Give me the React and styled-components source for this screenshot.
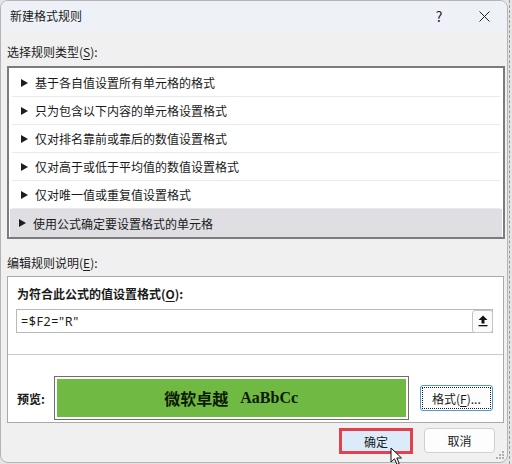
import React from "react";
import styled, { createGlobalStyle } from "styled-components";

const GlobalStyle = createGlobalStyle`
  html, body {
    margin: 0;
    padding: 0;
    background: #e4e4e4;
  }
  body {
    font-family: "Noto Sans CJK SC", "Noto Sans", sans-serif;
    font-size: 12px;
    color: #1a1a1a;
  }
`;

const Page = styled.div`
  position: relative;
  width: 512px;
  height: 464px;
  overflow: hidden;
  display: flex;
`;

const Window = styled.div`
  position: relative;
  width: 506px;
  height: 461px;
  border: 1px solid #b4b4b4;
  border-radius: 8px;
  background: #f0f0f0;
  display: flex;
  flex-direction: column;
  overflow: hidden;
  box-sizing: content-box;
`;

const SheetEdge = styled.div`
  flex: 1;
  border-left: 1px dashed #9a9a9a;
  margin-left: 1px;
`;

const TitleBar = styled.div`
  height: 30px;
  display: flex;
  align-items: center;
  justify-content: space-between;
  background: #eef2f8;
  padding-left: 9px;
`;

const Title = styled.span`
  font-size: 12px;
  line-height: 16px;
  color: #1a1a1a;
`;

const Controls = styled.div`
  display: flex;
  height: 100%;
`;

const ControlButton = styled.div`
  width: ${(p) => p.$w}px;
  height: 100%;
  display: flex;
  align-items: center;
  justify-content: center;
  font-size: 14px;
  color: #222;
`;

const Body = styled.div`
  flex: 1;
  display: flex;
  flex-direction: column;
  padding: 13px 2px 0 6px;
`;

const Label = styled.div`
  height: 16px;
  line-height: 16px;
  font-size: 12px;
  font-weight: ${(p) => (p.$bold ? 700 : 400)};
  margin-top: ${(p) => p.$top || 0}px;
`;

const Key = styled.span`
  text-decoration: underline;
  text-underline-offset: 2px;
`;

const RuleList = styled.div`
  margin-top: 6px;
  border: 2px solid #7c7c7c;
  background: #fff;
  padding: 1px 1px 0 1px;
  display: flex;
  flex-direction: column;
`;

const Rule = styled.div`
  height: 27px;
  display: flex;
  align-items: center;
  gap: 7px;
  padding-left: 9px;
  border-bottom: 1px solid ${(p) => (p.$selected ? "transparent" : "#e9e9e9")};
  background: ${(p) => (p.$selected ? "#dedee3" : "transparent")};
  margin: 0 ${(p) => (p.$selected ? 0 : 2)}px;
  font-size: 12px;
  &:last-child {
    border-bottom: none;
    height: 28px;
  }
`;

const Arrow = styled.span`
  width: 0;
  height: 0;
  border-left: 7px solid #1e1e1e;
  border-top: 4px solid transparent;
  border-bottom: 4px solid transparent;
`;

const Panel = styled.div`
  margin-top: 5px;
  margin-right: 1px;
  height: 145px;
  border: 1px solid #a9a9a9;
  background: #fff;
  display: flex;
  flex-direction: column;
`;

const PanelTop = styled.div`
  padding: 9px 10px 0 9px;
  display: flex;
  flex-direction: column;
`;

const FormulaField = styled.div`
  margin-top: 7px;
  margin-left: -1px;
  height: 22px;
  border: 1px solid #b9b9b9;
  display: flex;
  align-items: center;
  justify-content: space-between;
  padding-left: 4px;
  font-family: "Noto Sans", "Noto Sans CJK SC", sans-serif;
  font-size: 12.5px;
  letter-spacing: 0.6px;
`;

const CollapseButton = styled.div`
  width: 19px;
  height: 21px;
  margin-right: -1px;
  border: 1px solid #c4c4c4;
  border-radius: 3px;
  background: #fbfbfb;
  display: flex;
  align-items: center;
  justify-content: center;
`;

const Divider = styled.div`
  margin-top: 21px;
  height: 1px;
  background: #cbcbcb;
`;

const PreviewRow = styled.div`
  margin-top: 21px;
  padding: 0 10px 0 9px;
  display: flex;
  align-items: center;
`;

const PreviewLabel = styled.span`
  width: 37px;
  font-weight: 700;
  font-size: 12px;
`;

const PreviewBox = styled.div`
  width: 353px;
  height: 38px;
  border: 1px solid #6e6e6e;
  padding: 2px;
  box-sizing: content-box;
  display: flex;
`;

const Sample = styled.div`
  flex: 1;
  background: #70b943;
  display: flex;
  align-items: center;
  justify-content: center;
  gap: 12px;
  font-size: 16px;
  font-weight: 700;
  color: #0d1a06;
  font-family: "Liberation Serif", "Noto Sans CJK SC", serif;
`;

const FormatButton = styled.div`
  margin-left: 11px;
  width: 70px;
  height: 22px;
  border: 1px solid #4f97d6;
  border-radius: 3px;
  background: #fdfdfd;
  padding: 1px;
  display: flex;
`;

const FocusRing = styled.div`
  flex: 1;
  border: 1px dotted #222;
  display: flex;
  align-items: center;
  justify-content: center;
  font-size: 12px;
`;

const Footer = styled.div`
  flex: 1;
  display: flex;
  justify-content: flex-end;
  align-items: flex-start;
  gap: 11px;
  padding: 5px 10px 0 0;
`;

const Highlight = styled.div`
  width: 68px;
  height: 20px;
  border: 3px solid #e2404c;
  display: flex;
`;

const DialogButton = styled.div`
  flex: ${(p) => (p.$fill ? 1 : "none")};
  width: ${(p) => (p.$fill ? "auto" : "69px")};
  height: ${(p) => (p.$fill ? "auto" : "23px")};
  background: ${(p) => (p.$primary ? "#dcebfa" : "#fdfdfd")};
  border: ${(p) => (p.$primary ? "none" : "1px solid #d0d0d0")};
  border-radius: ${(p) => (p.$primary ? 0 : 4)}px;
  display: flex;
  align-items: center;
  justify-content: center;
  font-size: 12px;
`;

const Grip = styled.svg`
  position: absolute;
  right: 2px;
  bottom: 2px;
`;

const Pointer = styled.svg`
  position: absolute;
  left: 390px;
  top: 447px;
`;

const rules = [
  "基于各自值设置所有单元格的格式",
  "只为包含以下内容的单元格设置格式",
  "仅对排名靠前或靠后的数值设置格式",
  "仅对高于或低于平均值的数值设置格式",
  "仅对唯一值或重复值设置格式",
  "使用公式确定要设置格式的单元格",
];

const App = () => {
  return (
    <Page>
      <GlobalStyle />
      <Window>
        <TitleBar>
          <Title>新建格式规则</Title>
          <Controls>
            <ControlButton $w={44}>?</ControlButton>
            <ControlButton $w={46}>
              <svg width="11" height="11" viewBox="0 0 11 11">
                <path d="M0.5 0.5 L10.5 10.5 M10.5 0.5 L0.5 10.5" stroke="#222" strokeWidth="1" />
              </svg>
            </ControlButton>
          </Controls>
        </TitleBar>

        <Body>
          <Label>
            选择规则类型(<Key>S</Key>):
          </Label>
          <RuleList>
            {rules.map((r, i) => (
              <Rule key={i} $selected={i === rules.length - 1}>
                <Arrow />
                {r}
              </Rule>
            ))}
          </RuleList>

          <Label $top={16}>
            编辑规则说明(<Key>E</Key>):
          </Label>
          <Panel>
            <PanelTop>
              <Label $bold>
                为符合此公式的值设置格式(<Key>O</Key>):
              </Label>
              <FormulaField>
                =$F2="R"
                <CollapseButton>
                  <svg width="10" height="12" viewBox="0 0 10 12">
                    <path d="M5 0.5 L9.5 5 L6.5 5 L6.5 8.5 L3.5 8.5 L3.5 5 L0.5 5 Z" fill="#111" />
                    <rect x="0.5" y="10" width="9" height="1.3" fill="#111" />
                  </svg>
                </CollapseButton>
              </FormulaField>
            </PanelTop>
            <Divider />
            <PreviewRow>
              <PreviewLabel>预览:</PreviewLabel>
              <PreviewBox>
                <Sample>
                  <span>微软卓越</span>
                  <span>AaBbCc</span>
                </Sample>
              </PreviewBox>
              <FormatButton>
                <FocusRing>
                  格式(<Key>F</Key>)...
                </FocusRing>
              </FormatButton>
            </PreviewRow>
          </Panel>

          <Footer>
            <Highlight>
              <DialogButton $primary $fill>确定</DialogButton>
            </Highlight>
            <DialogButton>取消</DialogButton>
          </Footer>
        </Body>

        <Grip width="10" height="10" viewBox="0 0 10 10">
          {[
            [8, 2],
            [8, 5],
            [5, 5],
            [8, 8],
            [5, 8],
            [2, 8],
          ].map(([x, y], i) => (
            <rect key={i} x={x - 1} y={y - 1} width="2" height="2" fill="#b0b0b0" />
          ))}
        </Grip>
      </Window>
      <SheetEdge />

      <Pointer width="14" height="20" viewBox="0 0 14 20">
        <path
          d="M1 1 L1 15 L4.5 11.8 L7 17.5 L9.2 16.5 L6.8 11 L11.5 11 Z"
          fill="#fff"
          stroke="#111"
          strokeWidth="1"
          strokeLinejoin="round"
        />
      </Pointer>
    </Page>
  );
};

export default App;
